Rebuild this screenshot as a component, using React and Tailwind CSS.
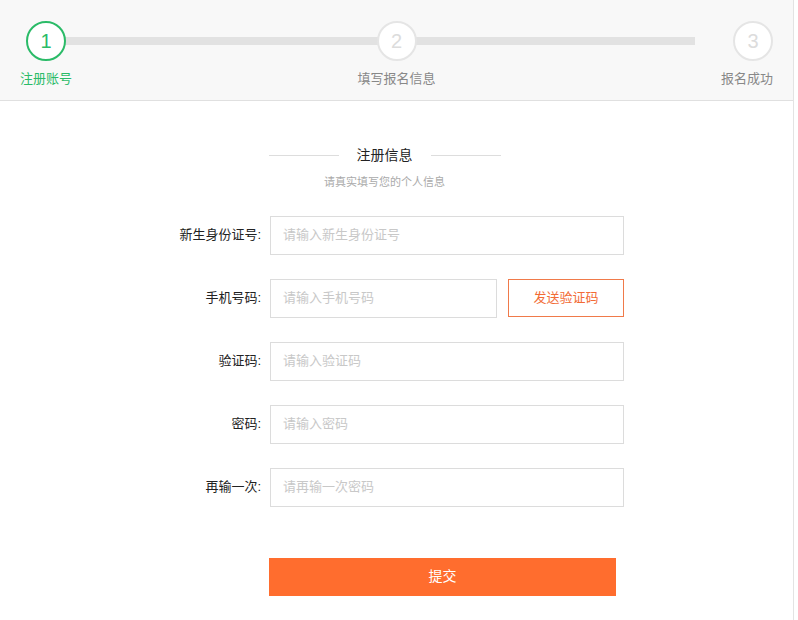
import React from 'react';

const steps = [
    { n: 1, label: '注册账号', active: true },
    { n: 2, label: '填写报名信息' },
    { n: 3, label: '报名成功' },
];

const fields = [
    { label: '新生身份证号:', ph: '请输入新生身份证号' },
    { label: '手机号码:', ph: '请输入手机号码', code: true },
    { label: '验证码:', ph: '请输入验证码' },
    { label: '密码:', ph: '请输入密码' },
    { label: '再输一次:', ph: '请再输一次密码' },
];

export default function App() {
    return (
        <div className="w-[798px] h-[620px] bg-white text-[13px]" style={{ fontFamily: '"Liberation Sans", "Noto Sans CJK SC", sans-serif' }}>
            <div className="w-[794px] h-full border-r border-[#e3e3e3]">
                {/* steps header */}
                <div className="h-[101px] bg-[#f8f8f8] border-b border-[#e0e0e0] relative">
                    <div className="absolute left-[46px] right-[98px] top-[37px] h-[8px] bg-[#e2e2e2]" />
                    <div className="relative flex justify-between px-[20px] pt-[21px]">
                        {steps.map(s => (
                            <div key={s.n} className="flex flex-col items-center w-[52px] first:items-start last:items-end">
                                <div className={`w-[40px] h-[40px] rounded-full bg-white flex items-center justify-center text-[20px] border-2 ${s.active ? 'border-[#2bbb68] text-[#2bbb68] ml-[6px]' : 'border-[#e5e5e5] text-[#dcdcdc]'}`}>
                                    {s.n}
                                </div>
                                <div className={`mt-[8px] whitespace-nowrap ${s.active ? 'text-[#2bbb68]' : 'text-[#888]'}`}>{s.label}</div>
                            </div>
                        ))}
                    </div>
                </div>

                {/* title */}
                <div className="flex items-center justify-center gap-[18px] mt-[44px] ml-[-24px]">
                    <div className="w-[70px] h-px bg-[#ddd]" />
                    <div className="text-[14px] text-[#222]">注册信息</div>
                    <div className="w-[70px] h-px bg-[#ddd]" />
                </div>
                <div className="text-center text-[11px] text-[#aaa] mt-[8px] ml-[-24px]">请真实填写您的个人信息</div>

                {/* form */}
                <div className="mt-[25px] flex flex-col gap-[24px]">
                    {fields.map(f => (
                        <div key={f.label} className="flex items-center">
                            <div className="w-[262px] text-right pr-[1px] text-[#222]">{f.label}</div>
                            <div className="ml-[8px] flex gap-[11px]">
                                <div className={`h-[39px] border border-[#dcdcdc] flex items-center px-[12px] text-[#c8c8c8] ${f.code ? 'w-[227px]' : 'w-[354px]'}`}>{f.ph}</div>
                                {f.code && (
                                    <div className="w-[116px] h-[38px] border border-[#f07a4a] text-[#f26b35] flex items-center justify-center">发送验证码</div>
                                )}
                            </div>
                        </div>
                    ))}
                </div>

                <div className="mt-[51px] ml-[269px] w-[347px] h-[38px] bg-[#ff6d2e] text-white text-[14px] flex items-center justify-center">提交</div>
            </div>
        </div>
    );
}
